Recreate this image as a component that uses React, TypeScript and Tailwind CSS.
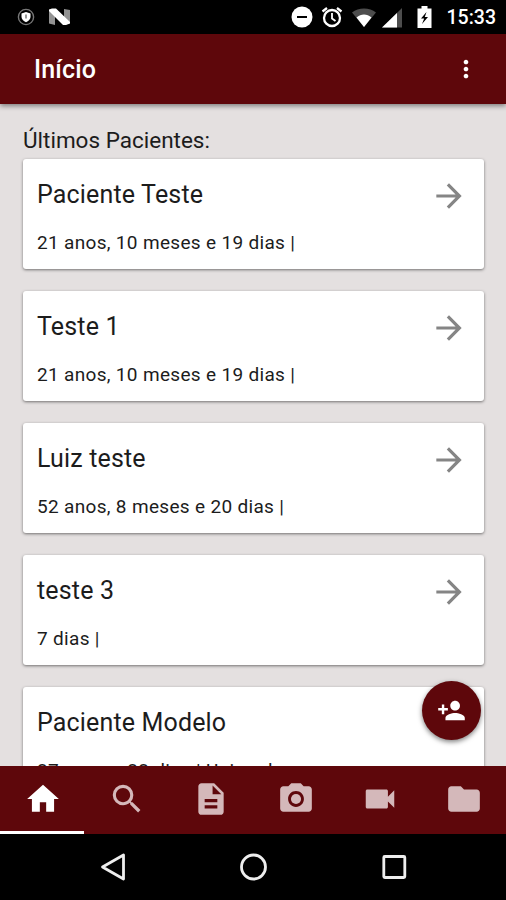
import type { IconType } from "react-icons";
import {
  MdArrowForward,
  MdCameraAlt,
  MdDescription,
  MdFolder,
  MdHome,
  MdMoreVert,
  MdPersonAdd,
  MdSearch,
  MdVideocam,
} from "react-icons/md";

interface Patient {
  name: string;
  info: string;
}

const patients: Patient[] = [
  { name: "Paciente Teste", info: "21 anos, 10 meses e 19 dias |" },
  { name: "Teste 1", info: "21 anos, 10 meses e 19 dias |" },
  { name: "Luiz teste", info: "52 anos, 8 meses e 20 dias |" },
  { name: "teste 3", info: "7 dias |" },
  { name: "Paciente Modelo", info: "27 anos e 22 dias | Unimed" },
];

const tabs: { id: string; icon: IconType }[] = [
  { id: "home", icon: MdHome },
  { id: "search", icon: MdSearch },
  { id: "notes", icon: MdDescription },
  { id: "camera", icon: MdCameraAlt },
  { id: "video", icon: MdVideocam },
  { id: "files", icon: MdFolder },
];

function StatusBar() {
  return (
    <div className="flex h-[34px] shrink-0 items-center bg-black pr-[10px] pl-[17px] text-white">
      <svg className="h-[18px] w-[18px]" viewBox="0 0 18 18" fill="none">
        <circle cx="9" cy="9" r="7.6" stroke="#777" strokeWidth="1.4" />
        <path d="M4.500 5.500 9 4l4.500 1.500V9c0 2.300-2 4-4.500 5.200C6.500 13 4.500 11.300 4.500 9z" fill="#fff" />
        <path d="M9 6.500v4" stroke="#777" strokeWidth="1.500" />
      </svg>
      <svg className="ml-3.5 h-[18px] w-[22px]" viewBox="0 0 22 18">
        <path d="M0 2h6v15l-6-1.500zM15 1l6 1v13l-6 2z" fill="#929292" />
        <path d="M0 1.500 3 .5h4L21 14v1.500L17 17h-3L0 3z" fill="#fff" />
      </svg>
      <div className="flex-1" />
      <svg className="h-[22px] w-[22px]" viewBox="0 0 22 22">
        <circle cx="11" cy="11" r="10.500" fill="#fff" />
        <path d="M6 10h10v2H6z" fill="#000" />
      </svg>
      <svg className="ml-[8px] h-[22px] w-[22px]" viewBox="0 0 22 22" fill="none" stroke="#fff">
        <circle cx="11" cy="12" r="8" strokeWidth="2.300" />
        <path d="M1.500 5.500 6 2M16 2l4.500 3.500" strokeWidth="2.300" />
        <path d="M11 7v5.500l3.500 2.500" strokeWidth="1.800" />
      </svg>
      <svg className="ml-[9px] h-[22px] w-[24px]" viewBox="0 0 24 22">
        <path d="M0 6.500C6.500 1 17.500 1 24 6.500L12 21z" fill="#4d4d4d" />
        <path d="M4.500 11.500c4.500-4 10.500-4 15 0L12 21z" fill="#fff" />
      </svg>
      <svg className="ml-[6px] h-[22px] w-[21px]" viewBox="0 0 21 22">
        <path d="M20 2v19.500H0z" fill="#4d4d4d" />
        <path d="M15 6.900v14.600H0z" fill="#fff" />
      </svg>
      <svg className="ml-[14px] h-[22px] w-[15px]" viewBox="0 0 15 22">
        <path d="M4.500 0h6v2.500h4V22H.5V2.500h4z" fill="#fff" />
        <path d="M9.500 6 4 12.500h3.200L5 18l6-7H7.800z" fill="#000" />
      </svg>
      <span className="ml-[15px] pt-[2px] text-[19.5px] leading-none font-medium">15:33</span>
    </div>
  );
}

function PatientCard({ patient }: { patient: Patient }) {
  return (
    <div className="flex h-[110px] shrink-0 justify-between rounded-[3px] bg-white pt-[18px] pr-[16px] pl-[14px] shadow-[0_1px_3px_rgba(0,0,0,0.5)]">
      <div className="pt-px">
        <h3 className="text-[25px] leading-[34px] tracking-[0.16px]">{patient.name}</h3>
        <p className="mt-[18px] text-[19px] leading-[26px] tracking-[0.32px]">{patient.info}</p>
      </div>
      <MdArrowForward className="h-[38px] w-[38px] text-[#858585]" />
    </div>
  );
}

function TabBar() {
  return (
    <nav className="relative z-10 grid h-[68px] shrink-0 grid-cols-6 bg-[#5e070b]">
      {tabs.map(({ id, icon: Icon }) => (
        <button
          key={id}
          aria-label={id}
          className={
            id === "home"
              ? "flex items-center justify-center border-b-[3px] border-white pt-px pl-px text-white"
              : "flex items-center justify-center border-b-[3px] border-transparent pt-px pl-px text-[#d4b8ba]"
          }
        >
          <Icon className="h-[38px] w-[38px]" />
        </button>
      ))}
    </nav>
  );
}

export default function App() {
  return (
    <div className="flex h-[900px] w-[506px] flex-col overflow-hidden bg-[#e4e0e0] font-[Roboto,sans-serif] text-[#1c1c1c]">
      <StatusBar />
      <header className="relative z-10 flex h-[70px] shrink-0 items-center justify-between bg-[#5e070b] pr-[26px] pl-[34px] text-white shadow-[0_2px_5px_rgba(0,0,0,0.45)]">
        <h1 className="pt-[2px] text-[25px] font-medium tracking-[0.15px]">Início</h1>
        <MdMoreVert className="h-[28px] w-[28px]" />
      </header>

      <main className="relative min-h-0 flex-1">
        <div className="flex h-full flex-col overflow-hidden pt-[20px] pr-[22px] pl-[23px]">
          <h2 className="mb-[3px] shrink-0 text-[22.5px] leading-[32px]">Últimos Pacientes:</h2>
          <div className="flex flex-col gap-[22px]">
            {patients.map((patient) => (
              <PatientCard key={patient.name} patient={patient} />
            ))}
          </div>
        </div>
        <button
          aria-label="Adicionar paciente"
          className="absolute right-[25px] bottom-[26px] flex h-[59px] w-[59px] items-center justify-center rounded-full bg-[#5e070b] text-white shadow-[0_2px_5px_rgba(0,0,0,0.5)]"
        >
          <MdPersonAdd className="h-[29px] w-[29px]" />
        </button>
      </main>

      <TabBar />
      <div className="flex h-[66px] shrink-0 items-center justify-center bg-black">
        <div className="flex w-[422px] items-center justify-around">
          <svg className="h-[30px] w-[30px]" viewBox="0 0 30 30" fill="none" stroke="#eee" strokeWidth="2.800" strokeLinejoin="round">
            <path d="M26.500 3v24L5.500 15z" />
          </svg>
          <svg className="h-[30px] w-[30px]" viewBox="0 0 30 30" fill="none" stroke="#eee" strokeWidth="2.800">
            <circle cx="15.500" cy="15" r="12" />
          </svg>
          <svg className="h-[30px] w-[30px]" viewBox="0 0 30 30" fill="none" stroke="#eee" strokeWidth="2.800">
            <rect x="4.800" y="4.500" width="21" height="21" rx="1" />
          </svg>
        </div>
      </div>
    </div>
  );
}
